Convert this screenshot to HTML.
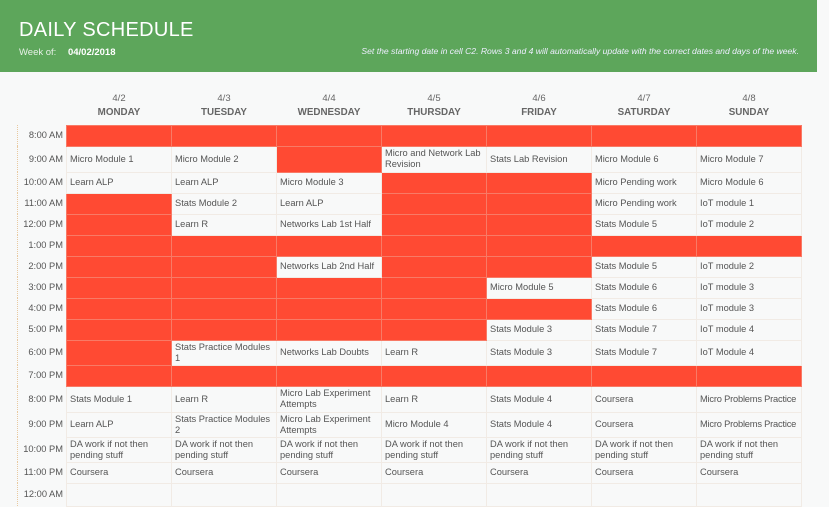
<!DOCTYPE html>
<html><head><meta charset="utf-8"><style>
*{margin:0;padding:0;box-sizing:border-box}
body{width:829px;height:506px;overflow:hidden;background:#f8f9f9;font-family:"Liberation Sans",sans-serif;color:#555;position:relative}
.hdr{position:absolute;left:0;top:0;width:817px;height:72px;background:#5da65b;color:#fff}
.t{position:absolute;left:19px;top:19px;font-size:20px;letter-spacing:0.3px}
.w{position:absolute;left:19px;top:47px;font-size:9.5px;color:#e6f0e6}
.w b{margin-left:9px;color:#fff}
.n{position:absolute;right:18px;top:46px;font-size:8.6px;font-style:italic;color:#eef}
table{position:absolute;left:17px;top:92px;border-collapse:collapse;table-layout:fixed;font-size:9.3px}
td{border:1px solid #f1ebe5;padding:0 2px 0 3px;line-height:11px;vertical-align:middle;overflow:hidden}
td.tm{text-align:right;padding:0 3px 0 0;border:none;border-left:1px dotted #e8c9a0}
.r{background:#ff4a33;border-color:#f87a66}
th{font-size:9.5px;font-weight:normal;color:#666;text-align:center;line-height:14px;vertical-align:top}
th b{display:block;color:#666;font-size:9.8px}
.nw{white-space:nowrap;letter-spacing:-0.2px}
</style></head><body>
<div class="hdr"><div class="t">DAILY SCHEDULE</div><div class="w">Week of: <b>04/02/2018</b></div><div class="n">Set the starting date in cell C2. Rows 3 and 4 will automatically update with the correct dates and days of the week.</div></div>
<table>
<colgroup><col style="width:49px"><col style="width:105px"><col style="width:105px"><col style="width:105px"><col style="width:105px"><col style="width:105px"><col style="width:105px"><col style="width:105px"></colgroup>
<tr style="height:33px"><th></th><th>4/2<b>MONDAY</b></th><th>4/3<b>TUESDAY</b></th><th>4/4<b>WEDNESDAY</b></th><th>4/5<b>THURSDAY</b></th><th>4/6<b>FRIDAY</b></th><th>4/7<b>SATURDAY</b></th><th>4/8<b>SUNDAY</b></th></tr>
<tr style="height:21px"><td class="tm">8:00 AM</td><td class="r"></td><td class="r"></td><td class="r"></td><td class="r"></td><td class="r"></td><td class="r"></td><td class="r"></td></tr>
<tr style="height:26px"><td class="tm">9:00 AM</td><td>Micro Module 1</td><td>Micro Module 2</td><td class="r"></td><td>Micro and Network Lab Revision</td><td>Stats Lab Revision</td><td>Micro Module 6</td><td>Micro Module 7</td></tr>
<tr style="height:21px"><td class="tm">10:00 AM</td><td>Learn ALP</td><td>Learn ALP</td><td>Micro Module 3</td><td class="r"></td><td class="r"></td><td>Micro Pending work</td><td>Micro Module 6</td></tr>
<tr style="height:21px"><td class="tm">11:00 AM</td><td class="r"></td><td>Stats Module 2</td><td>Learn ALP</td><td class="r"></td><td class="r"></td><td>Micro Pending work</td><td>IoT module 1</td></tr>
<tr style="height:21px"><td class="tm">12:00 PM</td><td class="r"></td><td>Learn R</td><td>Networks Lab 1st Half</td><td class="r"></td><td class="r"></td><td>Stats Module 5</td><td>IoT module 2</td></tr>
<tr style="height:21px"><td class="tm">1:00 PM</td><td class="r"></td><td class="r"></td><td class="r"></td><td class="r"></td><td class="r"></td><td class="r"></td><td class="r"></td></tr>
<tr style="height:21px"><td class="tm">2:00 PM</td><td class="r"></td><td class="r"></td><td>Networks Lab 2nd Half</td><td class="r"></td><td class="r"></td><td>Stats Module 5</td><td>IoT module 2</td></tr>
<tr style="height:21px"><td class="tm">3:00 PM</td><td class="r"></td><td class="r"></td><td class="r"></td><td class="r"></td><td>Micro Module 5</td><td>Stats Module 6</td><td>IoT module 3</td></tr>
<tr style="height:21px"><td class="tm">4:00 PM</td><td class="r"></td><td class="r"></td><td class="r"></td><td class="r"></td><td class="r"></td><td>Stats Module 6</td><td>IoT module 3</td></tr>
<tr style="height:21px"><td class="tm">5:00 PM</td><td class="r"></td><td class="r"></td><td class="r"></td><td class="r"></td><td>Stats Module 3</td><td>Stats Module 7</td><td>IoT module 4</td></tr>
<tr style="height:25px"><td class="tm">6:00 PM</td><td class="r"></td><td>Stats Practice Modules 1</td><td>Networks Lab Doubts</td><td>Learn R</td><td>Stats Module 3</td><td>Stats Module 7</td><td>IoT Module 4</td></tr>
<tr style="height:21px"><td class="tm">7:00 PM</td><td class="r"></td><td class="r"></td><td class="r"></td><td class="r"></td><td class="r"></td><td class="r"></td><td class="r"></td></tr>
<tr style="height:26px"><td class="tm">8:00 PM</td><td>Stats Module 1</td><td>Learn R</td><td>Micro Lab Experiment Attempts</td><td>Learn R</td><td>Stats Module 4</td><td>Coursera</td><td class="nw">Micro Problems Practice</td></tr>
<tr style="height:25px"><td class="tm">9:00 PM</td><td>Learn ALP</td><td>Stats Practice Modules 2</td><td>Micro Lab Experiment Attempts</td><td>Micro Module 4</td><td>Stats Module 4</td><td>Coursera</td><td class="nw">Micro Problems Practice</td></tr>
<tr style="height:25px"><td class="tm">10:00 PM</td><td>DA work if not then pending stuff</td><td>DA work if not then pending stuff</td><td>DA work if not then pending stuff</td><td>DA work if not then pending stuff</td><td>DA work if not then pending stuff</td><td>DA work if not then pending stuff</td><td>DA work if not then pending stuff</td></tr>
<tr style="height:21px"><td class="tm">11:00 PM</td><td>Coursera</td><td>Coursera</td><td>Coursera</td><td>Coursera</td><td>Coursera</td><td>Coursera</td><td>Coursera</td></tr>
<tr style="height:23px"><td class="tm">12:00 AM</td><td></td><td></td><td></td><td></td><td></td><td></td><td></td></tr>
</table>
</body></html>
